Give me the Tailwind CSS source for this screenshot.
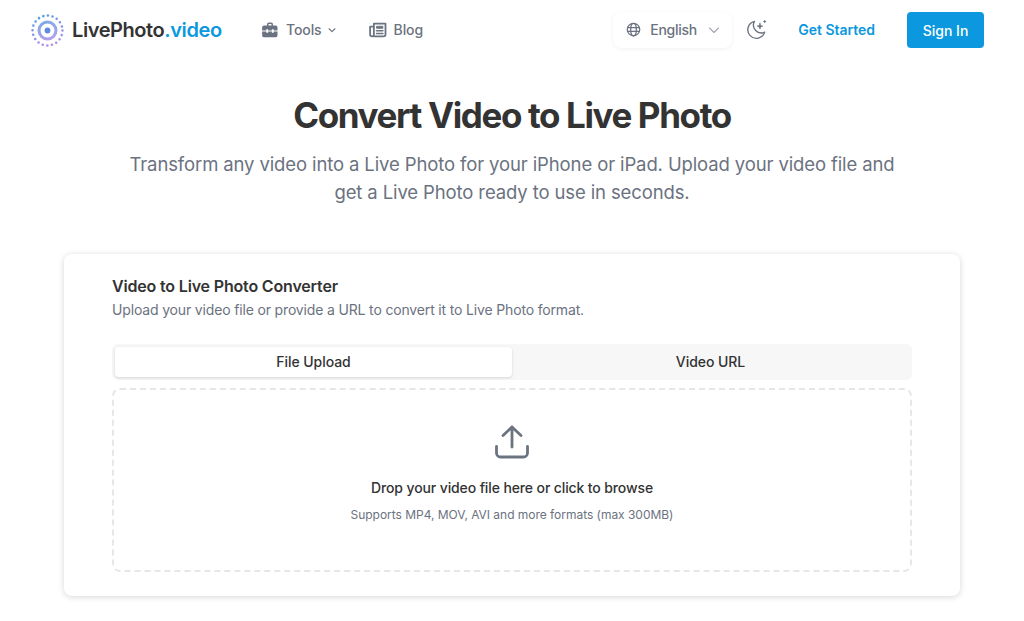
<!DOCTYPE html>
<html lang="en">
<head>
  <meta charset="UTF-8" />
  <meta name="viewport" content="width=device-width, initial-scale=1.0"/>
  <title>Convert Video to Live Photo</title>
  <script src="https://cdn.jsdelivr.net/npm/@tailwindcss/browser@4"></script>
</head>
<body class="bg-white text-[#333] font-[Inter,sans-serif] h-[621px] overflow-hidden">
  <header class="h-[60px] pl-[31px] pr-[40px] flex items-center">
    <a href="#" class="flex items-center gap-[8px] w-[191px]">
      <svg class="w-[33px] h-[33px] shrink-0" viewBox="0 0 32 32" fill="none">
        <defs>
          <linearGradient id="logoGrad" x1="10" y1="0" x2="22" y2="32" gradientUnits="userSpaceOnUse">
            <stop offset="0" stop-color="#4f9fe2"/>
            <stop offset="1" stop-color="#bb8bec"/>
          </linearGradient>
        </defs>
        <circle cx="16" cy="16" r="14.500" stroke="url(#logoGrad)" stroke-width="2.500" stroke-linecap="round" stroke-dasharray="0 4.555"/>
        <circle cx="16" cy="16" r="8.200" stroke="url(#logoGrad)" stroke-width="3" opacity=".85"/>
        <circle cx="16" cy="16" r="2.800" fill="#5d8be0"/>
      </svg>
      <span class="text-[20px] font-semibold tracking-[-0.42px] leading-none whitespace-nowrap">LivePhoto<span class="text-[#0b98de]">.video</span></span>
    </a>
    <nav class="flex items-center ml-[39px] -mt-[1px] text-[14px] font-medium tracking-[-0.1px] text-[#6b7280]">
      <a href="#" class="flex items-center">
        <svg class="w-[18px] h-[18px] mr-[7px]" viewBox="0 0 24 24" fill="#6b7280">
          <path d="M8 6V4.500A2.500 2.500 0 0 1 10.500 2h3A2.500 2.500 0 0 1 16 4.500V6h3.500A2.500 2.500 0 0 1 22 8.500V12.500h-5V11h-2.500v1.500h-5V11H7v1.500H1.500V8.500A2.500 2.500 0 0 1 4 6h4Zm2-1.500V6h4V4.500a.5.5 0 0 0-.5-.5h-3a.5.5 0 0 0-.5.5ZM1.500 14h5.500v1.500h2.500V14h5v1.500H17V14h5v5a2.500 2.500 0 0 1-2.500 2.500h-15A2.500 2.500 0 0 1 1.500 19v-5Z"/>
        </svg>
        Tools
        <svg class="w-[10px] h-[10px] ml-[5px]" viewBox="0 0 12 12" fill="none" stroke="#6b7280" stroke-width="1.300" stroke-linecap="round" stroke-linejoin="round"><path d="M2.500 4.500 6 8l3.500-3.500"/></svg>
      </a>
      <a href="#" class="flex items-center ml-[32px]">
        <svg class="w-[18px] h-[18px] mr-[7px]" viewBox="0 0 24 24" fill="none" stroke="#6b7280" stroke-width="2.400" stroke-linejoin="round">
          <path d="M6 20.500h13.500a2.500 2.500 0 0 0 2.500-2.500V3.500H6.500V18a2.500 2.500 0 0 1-5 0V7.500h5"/>
          <path d="M10 13h8.500M10 16.800h8.500" stroke-linecap="round" stroke-width="2"/>
          <rect x="10" y="7" width="8.500" height="2.800" fill="#6b7280" stroke-width="1"/>
        </svg>
        Blog
      </a>
    </nav>
    <div class="ml-auto flex items-center -mt-[1px]">
      <button class="flex items-center w-[119px] h-[36px] pl-[13px] rounded-[8px] bg-white shadow-[0_1px_4px_rgba(0,0,0,0.06)] text-[14px] font-medium tracking-[-0.3px] text-[#6b7280]">
        <svg class="w-[15px] h-[15px] mr-[8px]" viewBox="0 0 24 24" fill="none" stroke="#6b7280" stroke-width="2"><circle cx="12" cy="12" r="10"/><ellipse cx="12" cy="12" rx="4.500" ry="10"/><path d="M2.500 9h19M2.500 15h19"/></svg>
        <span class="ml-[1px]">English</span>
        <svg class="w-[12px] h-[12px] ml-[11px]" viewBox="0 0 12 12" fill="none" stroke="#a3a9b3" stroke-width="1.100" stroke-linecap="round" stroke-linejoin="round"><path d="M1.500 4 6 8.500 10.500 4"/></svg>
      </button>
      <svg class="w-[21px] h-[21px] ml-[14px]" viewBox="0 0 20 20" fill="none" stroke="#6b7280" stroke-width="1.300" stroke-linecap="round" stroke-linejoin="round">
        <path d="M8 2.200A8.200 8.200 0 1 0 17.800 12.500 7.500 7.500 0 0 1 8 2.200Z"/>
        <path d="M13.300 4c.3 1.800.9 2.500 2.700 2.800-1.800.3-2.400 1-2.700 2.800-.3-1.800-.9-2.500-2.700-2.800 1.800-.3 2.400-1 2.700-2.800Z" fill="#6b7280" stroke-width=".6"/>
        <path d="M17.800 1.500v1.800M16.900 2.400h1.800" stroke-width="1"/>
      </svg>
      <a href="#" class="ml-[31px] text-[14px] font-semibold tracking-[-0.03px] text-[#0b98de]">Get Started</a>
      <a href="#" class="ml-[32px] w-[77px] h-[36px] mt-[1px] flex items-center justify-center rounded-[4px] bg-[#0b98de] text-white text-[14px] font-medium">Sign In</a>
    </div>
  </header>

  <main class="px-[64px]">
    <h1 class="mt-[33px] text-center text-[35px] leading-[44px] font-bold tracking-[-1.38px] text-[#333]">Convert Video to Live Photo</h1>
    <p class="mt-[13px] mx-auto max-w-[780px] text-center text-[18.500px] leading-[28px] tracking-[-0.12px] text-[#6b7280]">Transform any video into a Live Photo for your iPhone or iPad. Upload your video file and get a Live Photo ready to use in seconds.</p>

    <section class="mt-[48px] h-[342px] rounded-[8px] bg-white shadow-[0_1px_6px_rgba(0,0,0,0.16)] px-[48px] pt-[22px]">
      <h2 class="text-[16px] leading-[20px] font-semibold tracking-[-0.17px] text-[#333]">Video to Live Photo Converter</h2>
      <p class="mt-[4px] text-[14px] leading-[20px] tracking-[-0.16px] text-[#6b7280]">Upload your video file or provide a URL to convert it to Live Photo format.</p>

      <div class="mt-[24px] h-[36px] rounded-[6px] bg-[#f7f7f7] p-[3px] grid grid-cols-2 text-[14px] font-medium tracking-[-0.05px] text-[#333]">
        <button class="rounded-[4px] bg-white shadow-[0_1px_3px_rgba(0,0,0,0.14)] pb-[1px]">File Upload</button>
        <button class="pb-[1px]">Video URL</button>
      </div>

      <div class="mt-[8px] h-[184px] rounded-[8px] border-2 border-dashed border-[#e5e7eb] flex flex-col items-center">
        <svg class="mt-[32px] w-[40px] h-[40px]" viewBox="0 0 40 40" fill="none" stroke="#6b7280" stroke-width="2.800" stroke-linecap="round" stroke-linejoin="round">
          <path d="M20 25V5M11 13.500 20 5l9 8.500"/>
          <path d="M4.500 24.500V31a4 4 0 0 0 4 4h23a4 4 0 0 0 4-4v-6.500"/>
        </svg>
        <p class="mt-[16px] text-[14px] leading-[20px] font-medium tracking-[-0.12px] text-[#333]">Drop your video file here or click to browse</p>
        <p class="mt-[9px] text-[12px] leading-[16px] tracking-[-0.03px] text-[#6b7280]">Supports MP4, MOV, AVI and more formats (max 300MB)</p>
      </div>
    </section>
  </main>
</body>
</html>
